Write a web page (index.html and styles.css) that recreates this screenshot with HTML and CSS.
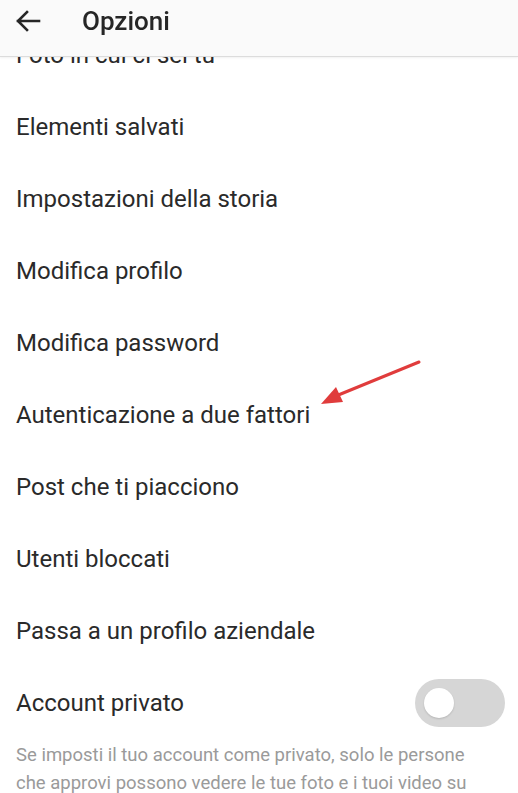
FILE: index.html
```html
<!DOCTYPE html>
<html lang="it">
<head>
  <meta charset="UTF-8" />
  <meta name="viewport" content="width=device-width, initial-scale=1.0" />
  <title>Opzioni</title>
  <link rel="stylesheet" href="styles.css">
</head>
<body>
  <!-- Barra superiore -->
  <header class="topbar">
    <svg class="back" width="26" height="22" viewBox="0 0 26 22">
      <path d="M24 11H3M12 2L3 11l9 9" fill="none" stroke="#262626" stroke-width="2.6" stroke-linecap="square" />
    </svg>
    <h1>Opzioni</h1>
  </header>

  <!-- Lista opzioni -->
  <ul class="lista">
    <li>Foto in cui ci sei tu</li>
    <li>Elementi salvati</li>
    <li>Impostazioni della storia</li>
    <li>Modifica profilo</li>
    <li>Modifica password</li>
    <li class="evidenziato">
      Autenticazione a due fattori
      <svg class="freccia" width="110" height="50" viewBox="0 0 110 50">
        <path d="M106 3L18 39" stroke="#e03c3c" stroke-width="3" stroke-linecap="round" />
        <path d="M8 45L23 28L30 43Z" fill="#e03c3c" />
      </svg>
    </li>
    <li>Post che ti piacciono</li>
    <li>Utenti bloccati</li>
    <li>Passa a un profilo aziendale</li>
    <li class="switch-row">
      Account privato
      <span class="toggle"><span class="knob"></span></span>
    </li>
  </ul>

  <p class="nota">Se imposti il tuo account come privato, solo le persone che approvi possono vedere le tue foto e i tuoi video su Instagram.</p>
</body>
</html>
```

FILE: styles.css
```css
/* Stili generali */
body {
  margin: 0;
  font-family: Roboto, "Noto Sans", Arial, sans-serif;
  background-color: #ffffff;
  color: #262626;
  overflow: hidden;
}

.topbar {
  position: fixed;
  top: 0;
  left: 0;
  right: 0;
  height: 42px;
  padding-bottom: 14px;
  display: flex;
  align-items: center;
  background-color: #fafafa;
  border-bottom: 1px solid #dcdcdc;
  box-shadow: 0 1px 2px rgba(0, 0, 0, 0.06);
  z-index: 2;
}

.back {
  margin-left: 15px;
}

.topbar h1 {
  margin: 0 0 0 41px;
  font-size: 26px;
  font-weight: 500;
  color: #262626;
}

.lista {
  list-style: none;
  margin: 0;
  padding: 19px 0 0;
}

.lista li {
  height: 72px;
  display: flex;
  align-items: center;
  padding: 0 16px;
  font-size: 24px;
  color: #2a2a2a;
}

.evidenziato {
  position: relative;
}

.freccia {
  position: absolute;
  left: 313px;
  top: -20px;
}

.switch-row {
  justify-content: space-between;
}

.toggle {
  width: 90px;
  height: 48px;
  border-radius: 24px;
  background-color: #d6d6d6;
  display: flex;
  align-items: center;
  margin-right: -3px;
}

.knob {
  width: 30px;
  height: 30px;
  border-radius: 50%;
  background-color: #ffffff;
  margin-left: 9px;
  box-shadow: 0 1px 2px rgba(0, 0, 0, 0.15);
}

.nota {
  margin: 2px 0 0;
  padding: 0 40px 0 16px;
  font-size: 18.5px;
  line-height: 28px;
  color: #9a9a9a;
}
```
